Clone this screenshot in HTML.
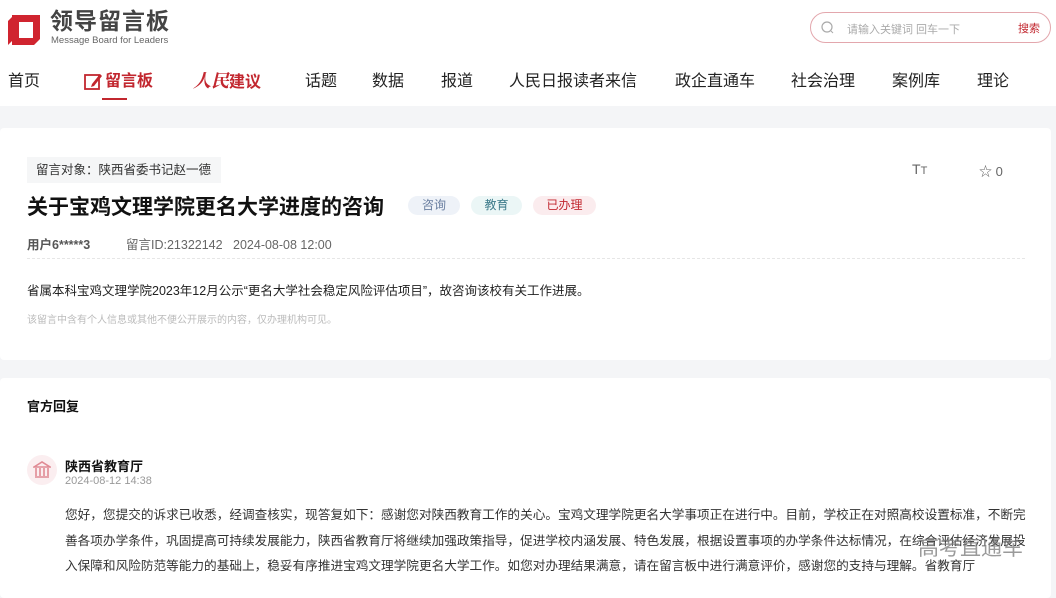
<!DOCTYPE html>
<html><head><meta charset="utf-8"><style>
*{margin:0;padding:0;box-sizing:border-box}
body{width:1056px;height:586px;overflow:hidden;background:#f4f5f7;font-family:"Liberation Sans","Noto Sans CJK SC",sans-serif;color:#222;position:relative}
.a{position:absolute;white-space:nowrap}
.top{position:absolute;left:0;top:0;width:1056px;height:106px;background:#fff}
.nav{font-size:16px;color:#222;top:71px;line-height:22px}
.card{position:absolute;background:#fff;border-radius:4px}
.tag{position:absolute;top:196px;height:19px;border-radius:10px;font-size:12px;line-height:19px;text-align:center}
</style></head><body>
<div class="top"></div>
<svg class="a" style="left:8px;top:11px" width="36" height="34" viewBox="0 0 36 34"><path d="M4 4h28v24l-6 6H4zM11 11v16h14V11z" fill="#d0242f" fill-rule="evenodd"/><path d="M0 10l6-6v24l-6 6z" fill="#d0242f"/></svg>
<div class="a" style="left:50px;top:8px;font-size:23px;line-height:26px;font-weight:bold;color:#444;letter-spacing:1px">领导留言板</div>
<div class="a" style="left:51px;top:35px;font-size:9.5px;line-height:11px;color:#666">Message Board for Leaders</div>
<div class="a" style="left:810px;top:12px;width:241px;height:31px;border:1px solid #e3a7ad;border-radius:16px"></div>
<svg class="a" style="left:821px;top:21px" width="13" height="13"><circle cx="6" cy="6" r="5" fill="none" stroke="#aaa" stroke-width="1.2"/><path d="M10 10l2 2" stroke="#aaa"/></svg>
<div class="a" style="left:847px;top:21px;font-size:11px;color:#aaa">请输入关键词 回车一下</div>
<div class="a" style="left:1018px;top:20px;font-size:11px;color:#c2272f">搜索</div>
<div class="a nav" style="left:8px">首页</div>
<svg class="a" style="left:84px;top:72px" width="19" height="19"><rect x="1" y="3" width="14" height="14" fill="none" stroke="#c2272f" stroke-width="1.8"/><path d="M8 12l8-10 2 2-8 10-3 1z" fill="#c2272f"/></svg>
<div class="a nav" style="left:105px;color:#c2272f;font-weight:bold">留言板</div>
<div class="a" style="left:102px;top:98px;width:25px;height:2px;background:#c2272f"></div>
<div class="a nav" style="left:193px;top:69px;color:#c2272f;font-weight:bold;font-style:italic;font-size:18px;font-family:'Noto Serif CJK SC',serif">人民<span style="font-family:'Noto Sans CJK SC';font-style:normal;font-size:16px">建议</span></div>
<div class="a nav" style="left:305px">话题</div>
<div class="a nav" style="left:372px">数据</div>
<div class="a nav" style="left:441px">报道</div>
<div class="a nav" style="left:509px">人民日报读者来信</div>
<div class="a nav" style="left:675px">政企直通车</div>
<div class="a nav" style="left:791px">社会治理</div>
<div class="a nav" style="left:892px">案例库</div>
<div class="a nav" style="left:977px">理论</div>

<div class="card" style="left:0;top:128px;width:1051px;height:232px"></div>
<div class="a" style="left:27px;top:157px;width:194px;height:26px;background:#f5f6f7;font-size:12.5px;line-height:26px;padding-left:9px;color:#333">留言对象：陕西省委书记赵一德</div>
<div class="a" style="left:912px;top:161px;font-size:14px;color:#666">T<span style="font-size:11px">T</span></div>
<div class="a" style="left:979px;top:161px;font-size:13px;color:#666">☆ 0</div>
<div class="a" style="left:27px;top:191px;font-size:21px;font-weight:bold;color:#111">关于宝鸡文理学院更名大学进度的咨询</div>
<div class="tag" style="left:408px;width:52px;background:#eef2f8;color:#6a7fa0">咨询</div>
<div class="tag" style="left:471px;width:51px;background:#ebf6f6;color:#3c7a8a">教育</div>
<div class="tag" style="left:533px;width:63px;background:#fbecee;color:#c2272f">已办理</div>
<div class="a" style="left:27px;top:234px;font-size:12.5px;color:#555"><b>用户6*****3</b></div>
<div class="a" style="left:126px;top:234px;font-size:12.5px;color:#666">留言ID:21322142&nbsp;&nbsp; 2024-08-08 12:00</div>
<div class="a" style="left:27px;top:258px;width:998px;border-top:1px dashed #e6e6e6"></div>
<div class="a" style="left:27px;top:280px;font-size:12.5px;color:#222">省属本科宝鸡文理学院2023年12月公示“更名大学社会稳定风险评估项目”，故咨询该校有关工作进展。</div>
<div class="a" style="left:27px;top:311px;font-size:10px;color:#bbb">该留言中含有个人信息或其他不便公开展示的内容，仅办理机构可见。</div>

<div class="card" style="left:0;top:378px;width:1051px;height:220px"></div>
<div class="a" style="left:27px;top:396px;font-size:13px;font-weight:bold;color:#111">官方回复</div>
<div class="a" style="left:27px;top:455px;width:30px;height:30px;border-radius:50%;background:#fbeef0"></div>
<svg class="a" style="left:33px;top:461px" width="18" height="18" viewBox="0 0 18 18"><path d="M1 6L9 1l8 5z M2 16h14M3 7v8M7 7v8M11 7v8M15 7v8" fill="none" stroke="#e08a94" stroke-width="1.6"/></svg>
<div class="a" style="left:65px;top:456px;font-size:13px;font-weight:bold;color:#111">陕西省教育厅</div>
<div class="a" style="left:65px;top:475px;font-size:11px;color:#999">2024-08-12 14:38</div>
<div class="a" style="left:65px;top:503px;width:966px;white-space:normal;font-size:12.65px;line-height:25.5px;color:#333">您好，您提交的诉求已收悉，经调查核实，现答复如下：感谢您对陕西教育工作的关心。宝鸡文理学院更名大学事项正在进行中。目前，学校正在对照高校设置标准，不断完善各项办学条件，巩固提高可持续发展能力，陕西省教育厅将继续加强政策指导，促进学校内涵发展、特色发展，根据设置事项的办学条件达标情况，在综合评估经济发展投入保障和风险防范等能力的基础上，稳妥有序推进宝鸡文理学院更名大学工作。如您对办理结果满意，请在留言板中进行满意评价，感谢您的支持与理解。省教育厅</div>
<div class="a" style="left:918px;top:532px;font-size:21px;color:rgba(120,120,120,0.75)">高考直通车</div>
</body></html>
